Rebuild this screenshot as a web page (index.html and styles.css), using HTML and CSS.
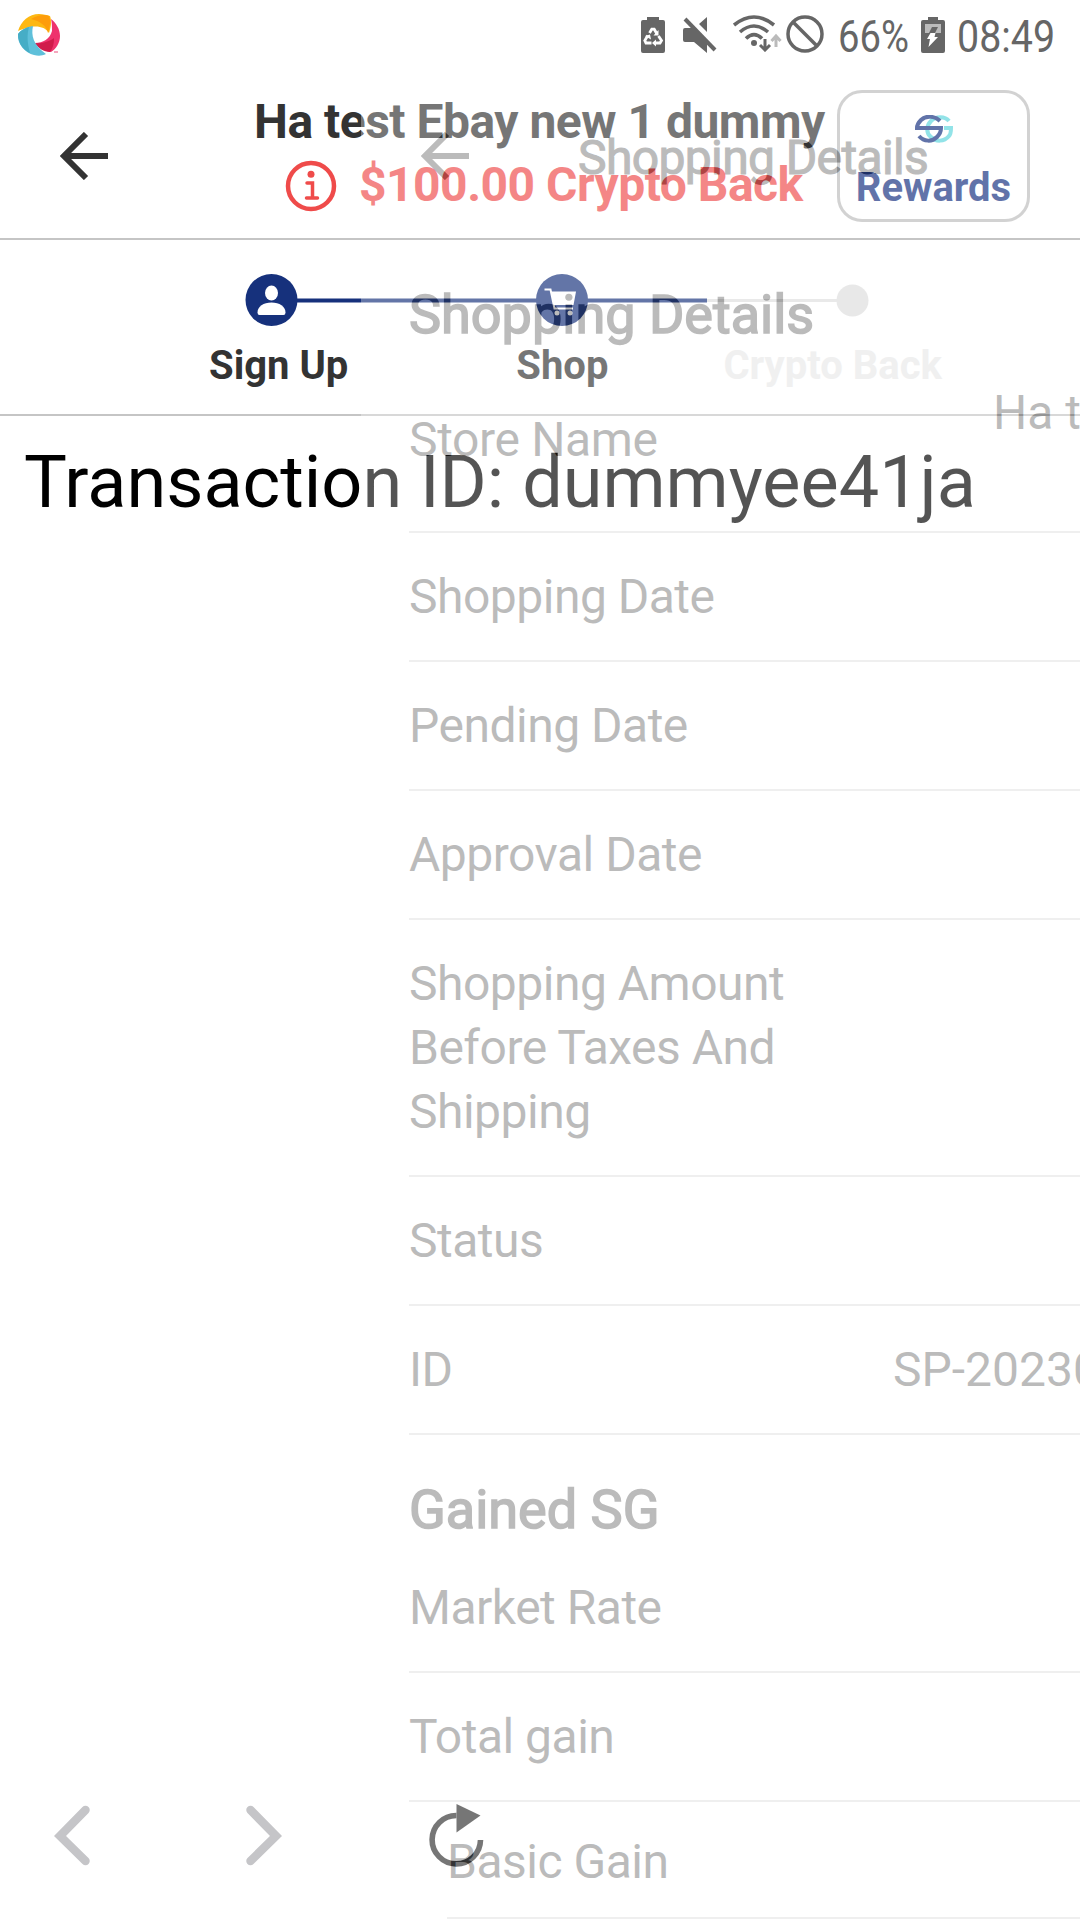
FILE: index.html
```html
<!DOCTYPE html>
<html lang="en">
<head>
<meta charset="utf-8">
<title>Shopping Details</title>
<link rel="stylesheet" href="styles.css">
</head>
<body>
<div class="device">
  <div class="statusbar">
    <svg class="app-logo" width="44" height="44" viewBox="0 0 44 44">
      <path d="M1 18C4 8 12 1 22 1c4 0 8 1 11 2 2 5 1 11-1 17C28 13 18 12 10 15 6 16 3 17 1 18z" fill="#fdb813"/>
      <path d="M14 6c7-4 13-5 18-3 2 5 1 11-1 17-1-7-8-12-17-14z" fill="#fd9d0b"/>
      <path d="M34 6c5 4 9 10 9 17 0 7-4 13-9 16-6-1-13-4-16-9 8 0 15-4 17-12 0-4 0-8-1-12z" fill="#ee336d"/>
      <path d="M18 30c5 1 14-1 19-5 0 6-1 10-4 14-6 0-12-4-15-9z" fill="#d01c4b"/>
      <path d="M1 21c3-4 8-7 15-8-2 9 0 19 13 28-4 2-8 2-12 1C8 40 0 31 1 21z" fill="#5fc0da"/>
      <path d="M1 21c3-4 7-6 11-7-2 7-2 15 1 26C6 37 1 30 1 21z" fill="#46adc6"/>
      <path d="M37 39h4" stroke="#f28aa8" stroke-width="1.5"/>
    </svg>
    <div class="status-icons">
      <svg width="24" height="36" viewBox="0 0 24 36">
        <path d="M6 0h12v3h4q2 0 2 2v29q0 2-2 2H2q-2 0-2-2V5q0-2 2-2h4z" fill="#666"/>
        <g fill="none" stroke="#fff" stroke-width="2.800">
          <path d="M8.500 16l2.300-3.800h2.400l2.500 4.300"/><path d="M17.500 19l3 4.500-1.500 2.500H14"/><path d="M10.500 26H5l-1.200-2.500 3-5"/>
        </g>
        <path d="M17.500 13v5.500h-5zM15 22.500v7l-4-3.500zM4 19l5-1.500 1 5z" fill="#fff"/>
      </svg>
      <svg class="mute" width="34" height="36" viewBox="0 0 34 36">
        <path d="M2 11h8l14 14v11L11 25H2q-2 0-2-2V13q0-2 2-2zM24 0v15l-8-8z" fill="#666"/>
        <path d="M2 2l30 31" stroke="#666" stroke-width="4"/>
      </svg>
      <svg class="wifi" width="50" height="37" viewBox="0 0 50 37">
        <g fill="none" stroke="#666" stroke-width="3.600"><path d="M1 10q20-16 40 0"/><path d="M7 17q14-12 28 0"/><path d="M13 23.500q8-8 16 0"/></g>
        <circle cx="21" cy="28" r="3" fill="#666"/>
        <path d="M32 24v11m-5-5 5 5 5-5" fill="none" stroke="#666" stroke-width="3"/>
        <path d="M43 32V21m-4.500 5 4.500-5 4.500 5" fill="none" stroke="#bbb" stroke-width="3"/>
      </svg>
      <svg class="block" width="38" height="38" viewBox="0 0 38 38"><g fill="none" stroke="#666" stroke-width="3.500"><circle cx="19" cy="19" r="17"/><path d="M7 7l24 24"/></g></svg>
      <span class="percent">66%</span>
      <svg class="battery" width="24" height="36" viewBox="0 0 24 36">
        <path d="M7 0h10v3h5q2 0 2 2v29q0 2-2 2H2q-2 0-2-2V5q0-2 2-2h5z" fill="#666"/>
        <path d="M4 7h16v9H4z" fill="#bbb"/><path d="M11 10h6l-3 6H8z" fill="#666"/>
        <path d="M9.500 16h5l-1 4h3.500L7.500 30l1.500-8H6z" fill="#fff"/>
      </svg>
      <span class="clock">08:49</span>
    </div>
  </div>

  <div class="screen store">
    <div class="header">
      <svg class="back" width="48" height="48" viewBox="0 0 48 48"><path d="M26 2 4 24l22 22M4 24h44" fill="none" stroke="#333" stroke-width="6"/></svg>
      <div class="headline">
        <div class="store-name">Ha test Ebay new 1 dummy</div>
        <div class="offer">
          <svg width="52" height="52" viewBox="0 0 52 52">
            <circle cx="26" cy="26" r="23" fill="none" stroke="#ef4b4a" stroke-width="4.500"/>
            <circle cx="26" cy="14.200" r="3.500" fill="#ef4b4a"/>
            <path d="M22 23h5.500v15M21.500 38h11" fill="none" stroke="#ef4b4a" stroke-width="3.500" stroke-linecap="round"/>
          </svg>
          <span>$100.00 Crypto Back</span>
        </div>
      </div>
      <div class="rewards">
        <svg width="38" height="28" viewBox="0 0 38 28">
          <path d="M34 6C30 1 21 1 16 6 11 11 11 18 16 22 21 27 29 27 34 21 36 19 36 17 36 13h-7" fill="none" stroke="#5dd6dd" stroke-width="4"/>
          <path d="M25 6C20 1 11 0 6 5 3 8 2 10 2 13h24c0 3-1 6-4 9-5 5-13 5-18-1" fill="none" stroke="#132e7f" stroke-width="4"/>
        </svg>
        <span>Rewards</span>
      </div>
    </div>
    <div class="steps">
      <svg class="track" width="624" height="54" viewBox="0 0 624 54">
        <path d="M462 26.500h140" stroke="#dfdfdf" stroke-width="3"/>
        <path d="M27 26.500h435" stroke="#16317c" stroke-width="4"/>
        <circle cx="26.500" cy="26" r="26" fill="#16317c"/>
        <ellipse cx="26.500" cy="19" rx="6.500" ry="7.500" fill="#fff"/>
        <path d="M12.500 38.500c0-6 6-10 14-10s14 4 14 10q0 2.500-2 2.500h-24q-2 0-2-2.500z" fill="#fff"/>
        <circle cx="317" cy="26" r="26" fill="#16317c"/>
        <path d="M306 17.500h25l-2.500 13.500H309z" fill="#fff"/>
        <path d="M299.500 15.500h6l4 19H328" fill="none" stroke="#fff" stroke-width="2"/>
        <circle cx="312" cy="39" r="2.500" fill="#fff"/><circle cx="325" cy="39" r="2.500" fill="#fff"/>
        <circle cx="607.500" cy="26.500" r="16" fill="#dedede"/>
      </svg>
      <div class="step-labels"><span>Sign Up</span><span>Shop</span><span class="upcoming">Crypto Back</span></div>
    </div>
    <div class="transaction">Transaction ID: dummyee41ja</div>
    <div class="browser-nav">
      <svg width="38" height="64" viewBox="0 0 38 64"><path d="M31.500 6 6 32l25.500 25" fill="none" stroke="#c5c5c8" stroke-width="8.500" stroke-linecap="round"/></svg>
      <svg width="38" height="64" viewBox="0 0 38 64"><path d="M4.500 6 30 32 4.500 57" fill="none" stroke="#c5c5c8" stroke-width="8.500" stroke-linecap="round"/></svg>
      <svg width="56" height="68" viewBox="0 0 56 68"><path d="M27.500 15.500a24.200 24.200 0 1 0 24 24.500" fill="none" stroke="#333" stroke-width="5.600"/><path d="M27.500 4 51.500 15.500l-24 17z" fill="#333"/></svg>
    </div>
  </div>

  <div class="screen details">
    <div class="header">
      <svg class="back" width="48" height="48" viewBox="0 0 48 48"><path d="M26 2 4 24l22 22M4 24h44" fill="none" stroke="#333" stroke-width="6"/></svg>
      <div class="details-title">Shopping Details</div>
    </div>
    <div class="details-body">
      <div class="section first">Shopping Details</div>
      <div class="row store-row"><span>Store Name</span><span class="value">Ha test</span></div>
      <div class="row"><span>Shopping Date</span></div>
      <div class="row"><span>Pending Date</span></div>
      <div class="row"><span>Approval Date</span></div>
      <div class="row"><span>Shopping Amount<br>Before Taxes And<br>Shipping</span></div>
      <div class="row"><span>Status</span></div>
      <div class="row id-row"><span>ID</span><span class="value">SP-20230</span></div>
      <div class="section">Gained SG</div>
      <div class="row"><span>Market Rate</span></div>
      <div class="row"><span>Total gain</span></div>
      <div class="row sub"><span>Basic Gain</span></div>
    </div>
  </div>
</div>
</body>
</html>
```
FILE: styles.css
```css
* { box-sizing: border-box; }
body { margin: 0; background: #fff; font-family: Roboto, "Liberation Sans", sans-serif; color: #333; }
svg { display: block; flex: none; }
span { white-space: nowrap; }

.device { display: grid; grid-template-rows: 72px 1848px; width: 1080px; height: 1920px; overflow: hidden; background: #fff; }
.statusbar { grid-area: 1 / 1; z-index: 3; display: flex; justify-content: space-between; padding: 13px 0 0 17px; }
.status-icons { display: flex; align-items: flex-start; width: 439px; padding-top: 4px; color: #666; font-size: 45px; line-height: 52px; }
.mute { margin-left: 18px; }
.wifi { margin: -2px 0 0 16px; }
.block { margin: -2px 0 0 3px; }
.percent { width: 70px; margin: -6px 0 0 14px; transform: scaleX(.85); transform-origin: left; }
.battery { margin-left: 13px; }
.clock { width: 98px; margin: -6px 0 0 12px; transform: scaleX(.875); transform-origin: left; }

.screen { grid-column: 1; min-width: 0; }
.store { grid-row: 2; display: flex; flex-direction: column; }
.header { display: flex; flex: none; height: 168px; padding-left: 60px; border-bottom: 2px solid #c5c5c5; }
.back { margin-top: 60px; }
.headline { width: 581px; margin: 18px 2px 0 146px; font-size: 48px; font-weight: 700; letter-spacing: -.5px; }
.store-name { line-height: 63px; white-space: nowrap; }
.offer { display: flex; align-items: center; gap: 22px; padding-left: 31px; line-height: 63px; color: #ef4b4a; }
.offer svg { margin-top: 2px; }
.rewards { display: flex; flex-direction: column; align-items: center; width: 193px; height: 132px; margin-top: 18px; padding-top: 22px; border: 3px solid #bdbdbd; border-radius: 25px; color: #132e7f; font-size: 40px; font-weight: 700; line-height: 60px; }
.rewards span { margin-top: 16px; line-height: 58px; }

.steps { flex: none; height: 176px; border-bottom: 2px solid #c5c5c5; }
.track { margin: 34px 0 0 245px; }
.step-labels { display: flex; gap: 168px; padding: 14px 0 0 209px; font-size: 40px; font-weight: 700; line-height: 48px; }
.step-labels .upcoming { margin-left: -53px; color: #e9e9e9; }
.transaction { padding: 23px 0 0 24px; color: #000; font-size: 72px; line-height: 88px; white-space: nowrap; }
.browser-nav { display: flex; align-items: flex-start; margin-top: auto; height: 120px; padding-left: 54px; }
.browser-nav svg { margin-top: 4px; }
.browser-nav svg:nth-child(2) { margin-left: 154px; }
.browser-nav svg:nth-child(3) { margin: 0 0 0 145px; }

/* incoming page, caught part-way through its slide and fade */
.details { grid-row: 1 / 3; z-index: 2; width: 719px; margin-left: 361px; padding-top: 72px; overflow: hidden; background: #fff; opacity: .33; }
.details-title { margin: 54px 0 0 109px; font-size: 48px; font-weight: 400; -webkit-text-stroke: 1.1px #333; letter-spacing: -.62px; line-height: 64px; white-space: nowrap; }
.details-body { padding-left: 48px; }
.section { height: 109px; padding-top: 43px; font-size: 54px; font-weight: 400; -webkit-text-stroke: 1.6px #333; line-height: 64px; }
.section.first { height: 116px; }
.row { display: flex; padding: 32px 0 31px; border-bottom: 2px solid #d0d0d0; font-size: 48px; letter-spacing: -.5px; line-height: 64px; overflow: hidden; }
.store-row { height: 177px; padding-top: 28px; padding-bottom: 35px; align-items: center; letter-spacing: -.35px; }
.value { margin-left: auto; }
.store-row .value { align-self: flex-start; width: 87px; margin-top: 1px; line-height: 56px; letter-spacing: 0; }
.id-row .value { width: 187px; letter-spacing: 0; }
.row.sub { margin-left: 38px; padding: 28px 0 23px; }
```
